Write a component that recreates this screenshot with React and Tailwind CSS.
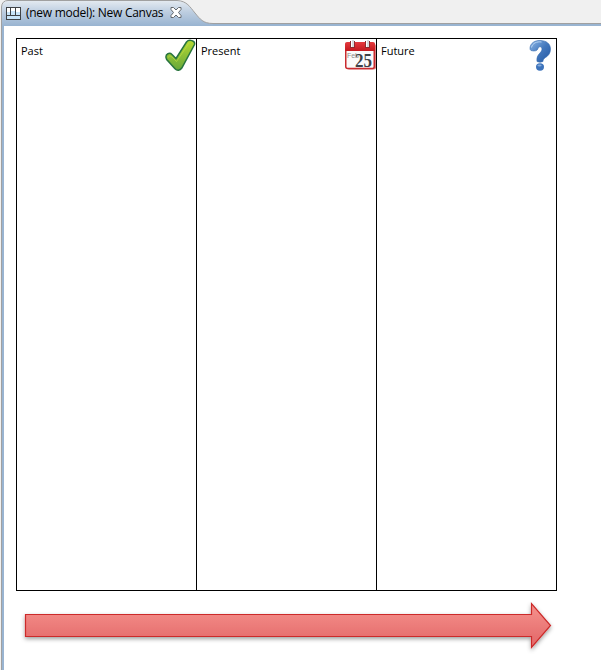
function TabShape() {
  return (
    <svg className="absolute inset-0" width="601" height="26" viewBox="0 0 601 26">
      <defs>
        <linearGradient id="tab" x1="0" y1="0" x2="0" y2="1">
          <stop offset="0" stopColor="#e3e9f0" />
          <stop offset="0.45" stopColor="#bccde0" />
          <stop offset="1" stopColor="#99b4d1" />
        </linearGradient>
      </defs>
      <path d="M2 26V7Q2 1 8 1H177C187 1 190 7 195 13C200 19 203 23.500 213 23.500H601V26Z" fill="url(#tab)" />
      <path d="M213 24H601V26H213Z" fill="#99b4d1" />
      <path d="M1.500 26V7Q2 .500 8 .500H177C187 1 190 7 195 13C200 19 203 23.500 213 23.500H601" fill="none" stroke="#a0a0a0" />
    </svg>
  );
}

function CanvasIcon() {
  return (
    <svg className="shrink-0" width="15" height="13" viewBox="0 0 15 13">
      <rect x=".5" y=".5" width="14" height="12" fill="#fff" stroke="#404346" />
      <path d="M1 5h3v3H1zM5 4h4v4H5zM10 5h4v3h-4zM1 9h13v3H1z" fill="#c8e4f8" />
      <path d="M4.500 1v7M9.500 1v7M1 8.500h13" fill="none" stroke="#404346" />
    </svg>
  );
}

function CloseIcon() {
  return (
    <svg className="-mt-px shrink-0" width="12" height="11" viewBox="0 0 12 11">
      <path d="M1 .500H3.500L6 3L8.500 .500H11V2.500L8.500 5.500L11 8.500V10.500H8.500L6 8L3.500 10.500H1V8.500L3.500 5.500L1 2.500Z" fill="#fff" stroke="#64686c" />
    </svg>
  );
}

function CheckIcon() {
  return (
    <svg width="32" height="34" viewBox="0 0 32 34">
      <defs>
        <linearGradient id="green" x1="0" y1="0" x2="0" y2="1">
          <stop offset="0" stopColor="#b5d832" />
          <stop offset="1" stopColor="#66a83a" />
        </linearGradient>
      </defs>
      <path d="M2 18.500C1.500 15 5.500 13 8 15.500L12 19.500L22.500 3C25 0 31.500 1.500 30.500 5.500L17.800 29C16 31.800 13 32 11 29.800L2.700 20.500Z" fill="url(#green)" stroke="#28743f" strokeWidth="1.500" />
      <path d="M4 18.500Q5.500 15.500 8 18L12.500 22.500L25 4" fill="none" stroke="#c2df45" strokeWidth="1" opacity=".6" />
    </svg>
  );
}

function CalendarIcon() {
  return (
    <svg width="31" height="32" viewBox="0 0 31 32">
      <defs>
        <linearGradient id="red" x1="0" y1="0" x2="0" y2="1">
          <stop offset="0" stopColor="#e43b3e" />
          <stop offset="1" stopColor="#c4181e" />
        </linearGradient>
      </defs>
      <rect x="2" y="4" width="29" height="25.500" rx="2" fill="#d98083" />
      <rect x=".75" y="3.500" width="28.500" height="25" rx="2" fill="#fafafa" stroke="#c92b2f" strokeWidth="1.500" />
      <path d="M0 11V4Q0 2 2 2H28Q30 2 30 4V11Z" fill="url(#red)" />
      <path d="M5 1h5v7h-5zM20 1h5v7h-5z" fill="#8e2a2d" />
      <path d="M6 0h3v7H6zM21 0h3v7h-3z" fill="#d6dadb" />
      <path d="M6.500 0v7M21.500 0v7" stroke="#fff" />
      <text x="2" y="18" textLength="12" lengthAdjust="spacingAndGlyphs" fontFamily="Liberation Sans, sans-serif" fontSize="8" fill="#8c8c8c">Feb</text>
      <text x="10" y="27" textLength="17" lengthAdjust="spacingAndGlyphs" fontFamily="Liberation Serif, serif" fontWeight="700" fontSize="18" fill="#3c4147">25</text>
    </svg>
  );
}

function QuestionIcon() {
  return (
    <svg width="22" height="32" viewBox="0 0 22 32">
      <defs>
        <linearGradient id="blue" x1="0" y1="0" x2="1" y2="1">
          <stop offset="0" stopColor="#8eb7e6" />
          <stop offset=".5" stopColor="#4378bd" />
          <stop offset="1" stopColor="#2458a3" />
        </linearGradient>
      </defs>
      <path d="M1 8C1.500 3 5.500 .500 11 .500C17.500 .500 21.500 4 21.500 9C21.500 13.500 19 16 16.500 17.500C14.500 19 14 20 14 21.500Q11 23 8 21.500C7.500 17 9 15 11 13C12.800 11 13.300 9.500 12.800 8C12 6.300 9.800 6.300 9 8.500C8.500 11 5 11.500 2 10.500Q1 10 1 8Z" fill="url(#blue)" stroke="#3469ae" strokeWidth=".6" />
      <ellipse cx="11" cy="27" rx="4" ry="3.700" fill="#3d73bb" />
      <ellipse cx="10.500" cy="25.500" rx="2.200" ry="1.100" fill="#86abdc" />
      <path d="M2.500 7.500C3.500 3 8 1.300 12.500 2" fill="none" stroke="#b6d3f3" />
    </svg>
  );
}

function TimelineArrow() {
  return (
    <svg className="mt-[7px] shrink-0" width="560" height="60" viewBox="15 598 560 60">
      <defs>
        <linearGradient id="arrow" x1="0" y1="0" x2="0" y2="1">
          <stop offset=".2" stopColor="#f28a86" />
          <stop offset=".8" stopColor="#e66e6e" />
        </linearGradient>
        <filter id="shadow" x="-5%" y="-20%" width="110%" height="150%">
          <feDropShadow dx="0" dy="2" stdDeviation="2" floodColor="#000" floodOpacity=".38" />
        </filter>
      </defs>
      <path d="M25.500 614.500H531.500V603.500L550.500 625.500L531.500 647.500V636.500H25.500Z" fill="url(#arrow)" stroke="#cc2929" strokeWidth="1.200" filter="url(#shadow)" />
    </svg>
  );
}

const columns = [
  { label: "Past", icon: <CheckIcon />, spacing: "pr-0 pt-0" },
  { label: "Present", icon: <CalendarIcon />, spacing: "pr-0 pt-px" },
  { label: "Future", icon: <QuestionIcon />, spacing: "pr-[5px] pt-px" },
];

export default function App() {
  return (
    <div className="flex h-[670px] w-[601px] flex-col overflow-hidden bg-white font-['Open_Sans','Noto_Sans',sans-serif] text-black">
      <header className="relative h-[26px] shrink-0 bg-[#f0f0f0]">
        <TabShape />
        <div className="relative flex h-[26px] items-center pl-1.5">
          <CanvasIcon />
          <span className="ml-[5px] w-36 whitespace-nowrap text-[12px] leading-[16px] tracking-[-0.27px]">(new model): New Canvas</span>
          <CloseIcon />
        </div>
      </header>
      <main className="flex grow">
        <div className="w-1 shrink-0 border-l border-[#f0f0f0] bg-[#99b4d1]">
          <div className="h-full w-px bg-[#a0a0a0]" />
        </div>
        <div className="flex flex-col pl-3 pt-3">
          <div className="flex h-[553px] w-[541px] shrink-0 border-l border-black">
            {columns.map(({ label, icon, spacing }) => (
              <section key={label} className="flex w-[180px] items-start justify-between border-y border-r border-black pl-1">
                <h2 className="pt-1 text-[11px] leading-[16px]">{label}</h2>
                <div className={spacing}>{icon}</div>
              </section>
            ))}
          </div>
          <div className="-ml-px flex">
            <TimelineArrow />
          </div>
        </div>
      </main>
    </div>
  );
}
